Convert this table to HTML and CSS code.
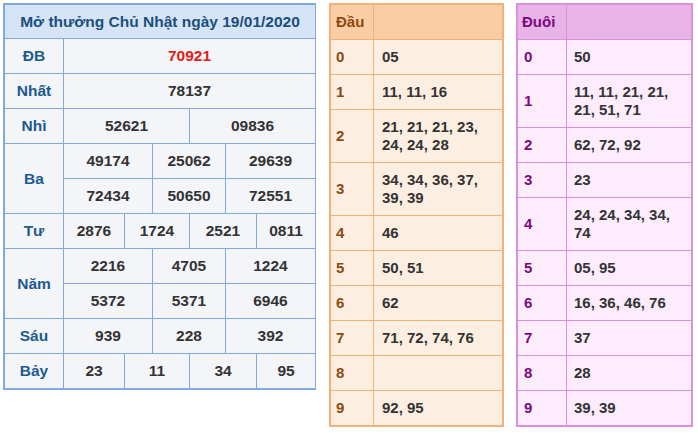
FILE: index.html
```html
<!DOCTYPE html>
<html lang="vi">
<head>
<meta charset="utf-8">
<title>Kết quả xổ số</title>
<link rel="stylesheet" href="styles.css">
</head>
<body>
<div class="wrap">
  <div class="kq">
    <div class="title">Mở thưởng Chủ Nhật ngày 19/01/2020</div>
    <div class="lbl">ĐB</div><div class="num s6 db">70921</div>
    <div class="lbl">Nhất</div><div class="num s6">78137</div>
    <div class="lbl">Nhì</div><div class="num s3">52621</div><div class="num s3">09836</div>
    <div class="lbl r2">Ba</div><div class="num s2">49174</div><div class="num s2">25062</div><div class="num s2">29639</div>
    <div class="num s2">72434</div><div class="num s2">50650</div><div class="num s2">72551</div>
    <div class="lbl">Tư</div><div class="num">2876</div><div class="num s2">1724</div><div class="num s2">2521</div><div class="num">0811</div>
    <div class="lbl r2">Năm</div><div class="num s2">2216</div><div class="num s2">4705</div><div class="num s2">1224</div>
    <div class="num s2">5372</div><div class="num s2">5371</div><div class="num s2">6946</div>
    <div class="lbl">Sáu</div><div class="num s2">939</div><div class="num s2">228</div><div class="num s2">392</div>
    <div class="lbl">Bảy</div><div class="num">23</div><div class="num s2">11</div><div class="num s2">34</div><div class="num">95</div>
  </div>

  <div class="lt dau">
    <div class="hd">Đầu</div><div class="hd"></div>
    <div class="k">0</div><div class="v">05</div>
    <div class="k">1</div><div class="v">11, 11, 16</div>
    <div class="k">2</div><div class="v">21, 21, 21, 23, 24, 24, 28</div>
    <div class="k">3</div><div class="v">34, 34, 36, 37, 39, 39</div>
    <div class="k">4</div><div class="v">46</div>
    <div class="k">5</div><div class="v">50, 51</div>
    <div class="k">6</div><div class="v">62</div>
    <div class="k">7</div><div class="v">71, 72, 74, 76</div>
    <div class="k">8</div><div class="v"></div>
    <div class="k">9</div><div class="v">92, 95</div>
  </div>

  <div class="lt duoi">
    <div class="hd">Đuôi</div><div class="hd"></div>
    <div class="k">0</div><div class="v">50</div>
    <div class="k">1</div><div class="v">11, 11, 21, 21, 21, 51, 71</div>
    <div class="k">2</div><div class="v">62, 72, 92</div>
    <div class="k">3</div><div class="v">23</div>
    <div class="k">4</div><div class="v">24, 24, 34, 34, 74</div>
    <div class="k">5</div><div class="v">05, 95</div>
    <div class="k">6</div><div class="v">16, 36, 46, 76</div>
    <div class="k">7</div><div class="v">37</div>
    <div class="k">8</div><div class="v">28</div>
    <div class="k">9</div><div class="v">39, 39</div>
  </div>
</div>
</body>
</html>
```

FILE: styles.css
```css
html, body {
  margin: 0;
  padding: 0;
  background: #ffffff;
}
body {
  font-family: "Liberation Sans", Arial, sans-serif;
  font-weight: bold;
  font-size: 15px;
  color: #333333;
}
.wrap {
  display: flex;
  align-items: flex-start;
  padding: 3px 0 0 3px;
}

/* results table */
.kq {
  display: grid;
  grid-template-columns: 58px 60px 27px 36px 35px 30px 58px;
  grid-auto-rows: 34px;
  grid-template-rows: 33px;
  gap: 1px;
  background: #82a9e0;
  border: 2px solid #82a9e0;
  width: 309px;
  font-size: 15.5px;
}
.kq > div {
  background: #f3f5f9;
  display: flex;
  align-items: center;
  justify-content: center;
  line-height: 18px;
}
.kq .title {
  grid-column: 1 / -1;
  background: #d5e4f6;
  color: #1b4f7c;
}
.kq .lbl {
  grid-column: 1;
  color: #1c5a8e;
}
.kq .r2 { grid-row: span 2; }
.kq .s2 { grid-column: span 2; }
.kq .s3 { grid-column: span 3; }
.kq .s6 { grid-column: span 6; }
.kq .db { color: #e41b17; }

/* loto tables */
.lt {
  display: grid;
  gap: 1px;
  grid-template-rows: 34px;
}
.lt > div {
  padding: 8px 0;
  line-height: 18px;
  display: flex;
  align-items: center;
}
.dau {
  margin-left: 13px;
  grid-template-columns: 42px 128px;
  background: #f0b27a;
  border: 2px solid #f0b27a;
}
.dau > div { background: #fdeee2; }
.dau .hd { background: #fbcda4; }
.dau .k, .dau .hd { padding-left: 5px; color: #8b4a10; }
.dau .v { padding-left: 8px; padding-right: 8px; }

.duoi {
  margin-left: 12px;
  grid-template-columns: 48px 124px;
  background: #da90da;
  border: 2px solid #da90da;
}
.duoi > div { background: #fcecfc; }
.duoi .hd { background: #e8b4e8; }
.duoi .k, .duoi .hd { padding-left: 4px; color: #7a0a7e; }
.duoi .k { padding-left: 6px; }
.duoi .v { padding-left: 7px; padding-right: 8px; }
.lt .hd { padding-top: 0; padding-bottom: 0; }
```
